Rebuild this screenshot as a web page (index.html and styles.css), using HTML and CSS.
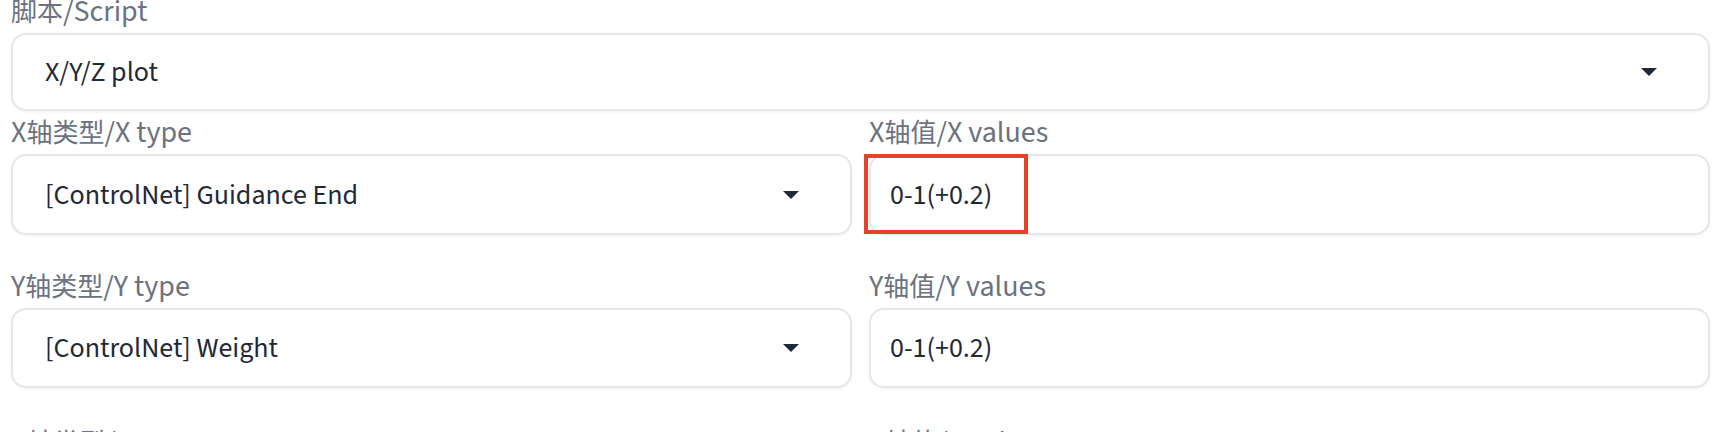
FILE: index.html
```html
<!DOCTYPE html>
<html lang="zh">
<head>
<meta charset="utf-8">
<link rel="stylesheet" href="styles.css">
</head>
<body>
<div class="page">
  <div class="field field-script">
    <div class="label"><span class="cjk">脚本</span>/Script</div>
    <div class="box dropdown box-script">
      <span class="value">X/Y/Z plot</span>
      <svg class="caret" width="16" height="8" viewBox="0 0 16 8"><path d="M0 0H16L8 8Z" fill="#1f2937"/></svg>
    </div>
  </div>

  <div class="row row-x">
    <div class="field">
      <div class="label">X<span class="cjk">轴类型</span>/X type</div>
      <div class="box dropdown">
        <span class="value">[ControlNet] Guidance End</span>
        <svg class="caret" width="16" height="8" viewBox="0 0 16 8"><path d="M0 0H16L8 8Z" fill="#1f2937"/></svg>
      </div>
    </div>
    <div class="field">
      <div class="label">X<span class="cjk">轴值</span>/X values</div>
      <div class="box textbox">
        <span class="value">0-1(+0.2)</span>
        <div class="highlight"></div>
      </div>
    </div>
  </div>

  <div class="row row-y">
    <div class="field">
      <div class="label">Y<span class="cjk">轴类型</span>/Y type</div>
      <div class="box dropdown">
        <span class="value">[ControlNet] Weight</span>
        <svg class="caret" width="16" height="8" viewBox="0 0 16 8"><path d="M0 0H16L8 8Z" fill="#1f2937"/></svg>
      </div>
    </div>
    <div class="field">
      <div class="label">Y<span class="cjk">轴值</span>/Y values</div>
      <div class="box textbox">
        <span class="value">0-1(+0.2)</span>
      </div>
    </div>
  </div>

  <div class="row row-z">
    <div class="field">
      <div class="label">Z<span class="cjk">轴类型</span>/Z type</div>
    </div>
    <div class="field">
      <div class="label">Z<span class="cjk">轴值</span>/Z values</div>
    </div>
  </div>
</div>
</body>
</html>
```

FILE: styles.css
```css
html, body {
  margin: 0;
  padding: 0;
  background: #ffffff;
  overflow: hidden;
}

.page {
  font-family: "Source Sans Pro", "Source Sans 3", Lato, "Noto Sans CJK SC", sans-serif;
  padding: 0 18px 0 11px;
  margin-top: -3px;
}

.label {
  font-size: 30px;
  line-height: 30px;
  height: 30px;
  color: #6b7280;
  margin-bottom: 6px;
  white-space: nowrap;
}

.cjk {
  font-family: "Noto Sans CJK SC", sans-serif;
  font-size: 26px;
  line-height: 1;
}

.box {
  position: relative;
  display: flex;
  align-items: center;
  box-sizing: border-box;
  background: #ffffff;
  border: 2px solid #e5e7eb;
  border-radius: 15px;
  box-shadow: 0 1px 3px rgba(0, 0, 0, 0.06);
  font-size: 28px;
  color: #1f2937;
  height: 81px;
}

.box-script {
  height: 78px;
}

.dropdown {
  padding: 0 51px 0 32px;
  justify-content: space-between;
}

.textbox {
  padding: 0 19px;
}

.value {
  white-space: nowrap;
}

.caret {
  display: block;
  flex: none;
}

.row {
  display: grid;
  grid-template-columns: 1fr 1fr;
  column-gap: 17px;
}

.row-x {
  margin-top: 7px;
}

.row-y {
  margin-top: 37px;
}

.row-y .box {
  height: 80px;
}

.row-z {
  margin-top: 40px;
}

.highlight {
  position: absolute;
  left: -7px;
  top: -2px;
  width: 164px;
  height: 80px;
  box-sizing: border-box;
  border: 4px solid #e8412b;
  pointer-events: none;
}
```
